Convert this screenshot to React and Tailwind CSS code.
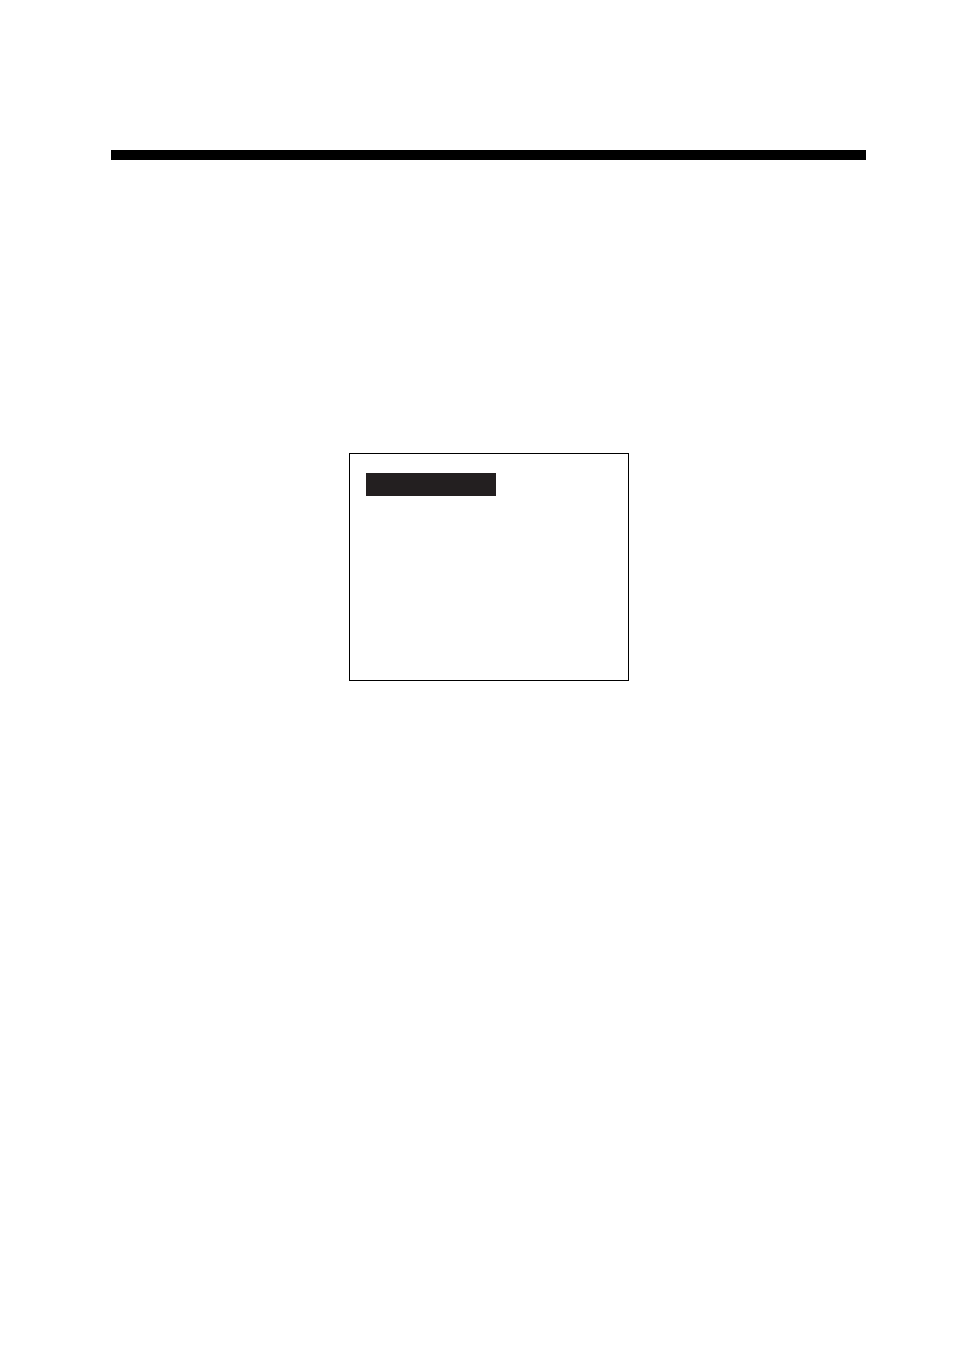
import React from 'react';

const MenuScreen = () => {
    return (
        <div className="w-[280px] h-[228px] border border-black bg-white px-4 pt-[19px]">
            <div className="w-[130px] h-[23px] bg-[#231f20]"></div>
        </div>
    );
};

const App = () => {
    return (
        <div className="min-h-screen bg-white pt-[150px] pl-[111px] pr-[88px]">
            <header className="h-[10px] bg-black"></header>
            <main className="flex justify-center pt-[293px]">
                <MenuScreen />
            </main>
        </div>
    );
};

export default App;
